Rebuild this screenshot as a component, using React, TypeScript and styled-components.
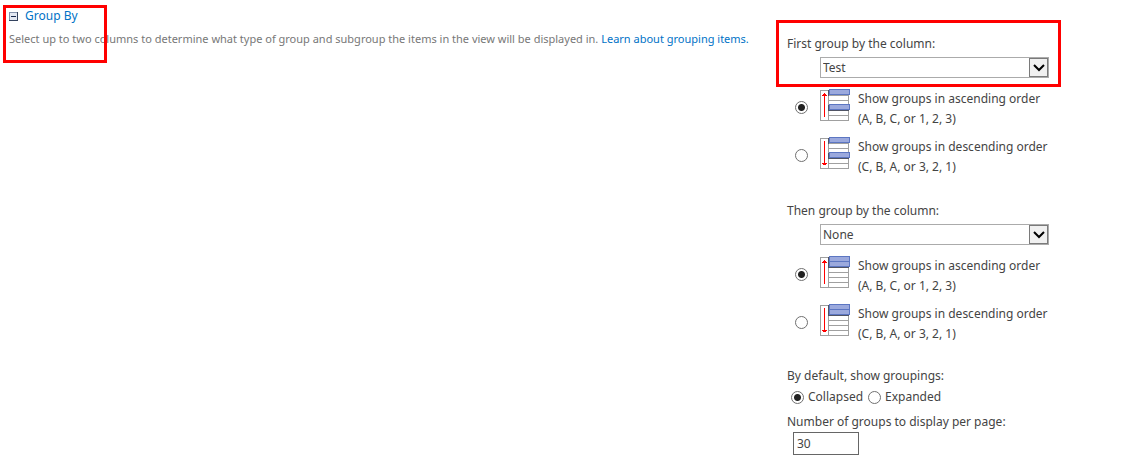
import React from "react";
import styled, { createGlobalStyle } from "styled-components";

const GlobalStyle = createGlobalStyle`
  *, *::before, *::after { box-sizing: border-box; }
  body {
    margin: 0;
    background: #fff;
    color: #444;
    font-family: "Segoe UI", "Noto Sans", "Open Sans", sans-serif;
    font-size: 12px;
    line-height: 20px;
  }
`;

const Page = styled.main`
  display: grid;
  grid-template-columns: minmax(0, 1fr) 353px;
  padding-left: 9px;
`;

const Intro = styled.section`
  position: relative;
  padding-top: 6px;
`;

const Heading = styled.h3`
  margin: 0;
  font-size: 12px;
  font-weight: 400;
`;

const Toggle = styled.button`
  display: flex;
  align-items: center;
  gap: 7px;
  padding: 0;
  border: 0;
  background: none;
  color: #0072c6;
  font: inherit;
  cursor: pointer;
`;

const Description = styled.p`
  margin: 3px 0 0;
  font-size: 11px;
  color: #777;
`;

const Link = styled.a`
  color: #0072c6;
  text-decoration: none;
`;

const Settings = styled.form`
  padding: 34px 8px 22px 1px;
`;

const Group = styled.fieldset`
  position: relative;
  min-width: 0;
  margin: 0 0 24px;
  padding: 0 0 0 9px;
  border: 0;

  &:last-of-type { margin: -2px 0 0; }
`;

const Label = styled.label`
  display: block;
`;

const SelectBox = styled.div`
  position: relative;
  width: 229px;
  margin: 3px 0 11px 33px;
`;

const Select = styled.select`
  display: block;
  width: 100%;
  height: 21px;
  padding: 0 22px 0 2px;
  border: 1px solid #ababab;
  border-radius: 0;
  background: #fff;
  color: #444;
  font: inherit;
  appearance: none;
`;

const SelectArrow = styled.span`
  position: absolute;
  top: 1px;
  right: 1px;
  display: flex;
  align-items: center;
  justify-content: center;
  width: 19px;
  height: 19px;
  border: 1px solid #7a7a7a;
  background: #f0f0f0;
  pointer-events: none;
`;

const Radio = styled.input`
  appearance: none;
  width: 13px;
  height: 13px;
  margin: 0;
  border: 1px solid #707070;
  border-radius: 50%;
  background: #fff;

  &:checked {
    background: radial-gradient(circle, #222 3px, #fff 4px);
  }
`;

const Choice = styled.label`
  display: grid;
  grid-template-columns: 25px 38px 1fr;
  align-items: start;
  padding-left: 8px;

  & + & { margin-top: 8px; }
  ${Radio} { margin-top: 12px; }
`;

const InlineChoices = styled.div`
  display: flex;
  gap: 5px;
  margin: 1px 0 5px;
  padding-left: 4px;
`;

const InlineChoice = styled.label`
  display: flex;
  align-items: center;
  gap: 4px;
`;

const NumberInput = styled.input`
  display: block;
  width: 66px;
  height: 23px;
  margin-left: 6px;
  padding: 0 3px;
  border: 1px solid #666;
  background: #fff;
  color: #444;
  font: inherit;
`;

const Highlight = styled.div<{ $top: number; $left: number; $width: number; $height: number }>`
  position: absolute;
  top: ${(p) => p.$top}px;
  left: ${(p) => p.$left}px;
  width: ${(p) => p.$width}px;
  height: ${(p) => p.$height}px;
  border: 3px solid #f00;
  pointer-events: none;
`;

function CollapseIcon() {
  return (
    <svg width="9" height="9" viewBox="0 0 9 9" shapeRendering="crispEdges" aria-hidden="true">
      <rect width="9" height="9" fill="#8492ac" />
      <rect x="1" y="1" width="7" height="7" fill="#e3e8f2" />
      <path d="M8 0h1v9H0V8h8z" fill="#34435f" />
      <rect x="2" y="4" width="5" height="1" fill="#17294d" />
    </svg>
  );
}

function OrderIcon({ descending, nested }: { descending?: boolean; nested?: boolean }) {
  const lines = nested ? [16, 21, 26] : [11, 26];
  const bands = nested ? [0, 5] : [0, 15];
  return (
    <svg width="30" height="32" viewBox="0 0 30 32" shapeRendering="crispEdges" aria-hidden="true">
      <rect x="0.5" y="1.5" width="28" height="30" fill="#fff" stroke="#a0a0a0" />
      <rect x="8" y="1" width="1" height="30" fill="#a0a0a0" />
      {lines.map((y) => (
        <rect key={y} x="8" y={y} width="20" height="1" fill="#a0a0a0" />
      ))}
      {bands.map((y) => (
        <g key={y}>
          {(!nested || y > 0) && <rect x="8" y={y + 6} width="21" height="1" fill={y > 0 ? "#505464" : "#a0a0a0"} />}
          <rect x="8" y={y + 1} width="1" height="6" fill="#505464" />
          <rect x="9.5" y={y + 0.5} width="20" height="5" fill="#9ba9dd" stroke="#5c76c2" />
        </g>
      ))}
      <g fill="#f00">
        <rect x="4" y="4" width="1" height="24" />
        <rect x="3" y={descending ? 27 : 5} width="3" height="1" />
        <rect x="2" y={descending ? 26 : 6} width="5" height="1" />
      </g>
    </svg>
  );
}

function ColumnGroup({ id, label, value, nested }: { id: string; label: string; value: string; nested?: boolean }) {
  return (
    <Group>
      {!nested && <Highlight $top={-14} $left={-2} $width={285} $height={67} />}
      <Label htmlFor={id}>{label}</Label>
      <SelectBox>
        <Select id={id} defaultValue={value}>
          <option>None</option>
          <option>Test</option>
        </Select>
        <SelectArrow>
          <svg width="12" height="8" viewBox="0 0 12 8" aria-hidden="true">
            <path d="M1 1l5 5 5-5" fill="none" stroke="#000" strokeWidth="2" />
          </svg>
        </SelectArrow>
      </SelectBox>
      <Choice>
        <Radio type="radio" name={`${id}-order`} defaultChecked />
        <OrderIcon nested={nested} />
        <span>
          Show groups in ascending order
          <br />
          (A, B, C, or 1, 2, 3)
        </span>
      </Choice>
      <Choice>
        <Radio type="radio" name={`${id}-order`} />
        <OrderIcon nested={nested} descending />
        <span>
          Show groups in descending order
          <br />
          (C, B, A, or 3, 2, 1)
        </span>
      </Choice>
    </Group>
  );
}

export default function App() {
  return (
    <>
      <GlobalStyle />
      <Page>
        <Intro>
          <Heading>
            <Toggle type="button" aria-expanded="true">
              <CollapseIcon />
              Group By
            </Toggle>
          </Heading>
          <Description>
            Select up to two columns to determine what type of group and subgroup the items in the view will be
            displayed in. <Link href="#grouping">Learn about grouping items.</Link>
          </Description>
          <Highlight $top={5} $left={-6} $width={104} $height={58} />
        </Intro>
        <Settings>
          <ColumnGroup id="first-column" label="First group by the column:" value="Test" />
          <ColumnGroup id="second-column" label="Then group by the column:" value="None" nested />
          <Group>
            <div id="groupings-label">By default, show groupings:</div>
            <InlineChoices role="radiogroup" aria-labelledby="groupings-label">
              <InlineChoice>
                <Radio type="radio" name="groupings" defaultChecked />
                Collapsed
              </InlineChoice>
              <InlineChoice>
                <Radio type="radio" name="groupings" />
                Expanded
              </InlineChoice>
            </InlineChoices>
            <Label htmlFor="group-count">Number of groups to display per page:</Label>
            <NumberInput id="group-count" type="text" defaultValue="30" />
          </Group>
        </Settings>
      </Page>
    </>
  );
}
